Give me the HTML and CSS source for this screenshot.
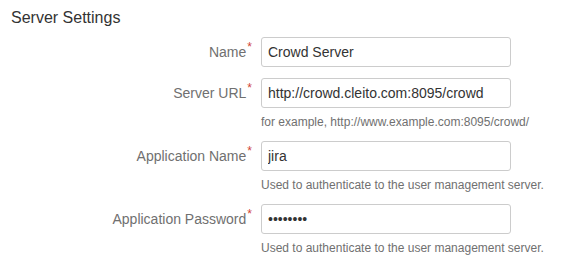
FILE: index.html
```html
<!DOCTYPE html>
<html lang="en">
<head>
  <meta charset="UTF-8">
  <title>Server Settings</title>
  <link rel="stylesheet" href="styles.css">
</head>
<body>
  <section class="settings">
    <h2>Server Settings</h2>

    <form class="settings-form">
      <label class="field-label" for="name">Name<span class="req">*</span></label>
      <input class="text" id="name" type="text" value="Crowd Server">

      <label class="field-label" for="url">Server URL<span class="req">*</span></label>
      <input class="text" id="url" type="text" value="http://crowd.cleito.com:8095/crowd">
      <div class="description">for example, http://www.example.com:8095/crowd/</div>

      <label class="field-label" for="app-name">Application Name<span class="req">*</span></label>
      <input class="text" id="app-name" type="text" value="jira">
      <div class="description">Used to authenticate to the user management server.</div>

      <label class="field-label" for="app-pass">Application Password<span class="req">*</span></label>
      <input class="text" id="app-pass" type="password" value="password">
      <div class="description">Used to authenticate to the user management server.</div>
    </form>
  </section>
</body>
</html>
```

FILE: styles.css
```css
body {
  font-family: "Liberation Sans", Arial, sans-serif;
  margin: 0;
  background: #fff;
  color: #333;
}

.settings {
  padding: 8px 11px;
}

.settings h2 {
  font-size: 16px;
  font-weight: normal;
  line-height: 20px;
  margin: 0 0 9px;
  color: #333;
}

.settings-form {
  display: grid;
  grid-template-columns: 241px 250px;
  column-gap: 9px;
  row-gap: 10px;
  margin: 0;
}

.field-label {
  grid-column: 1;
  text-align: right;
  font-size: 14px;
  line-height: 30px;
  color: #707070;
  white-space: nowrap;
}

.req {
  color: #d04437;
  font-size: 12px;
  position: relative;
  top: -6px;
  margin-left: 1px;
}

.text {
  grid-column: 2;
  box-sizing: border-box;
  width: 250px;
  height: 30px;
  margin: 0;
  padding: 0 6px;
  border: 1px solid #ccc;
  border-radius: 3px;
  font-family: "Liberation Sans", Arial, sans-serif;
  font-size: 14px;
  color: #333;
  background: #fff;
}

.description {
  grid-column: 2;
  font-size: 12px;
  line-height: 18px;
  color: #707070;
  margin-top: -6px;
  white-space: nowrap;
}
```
